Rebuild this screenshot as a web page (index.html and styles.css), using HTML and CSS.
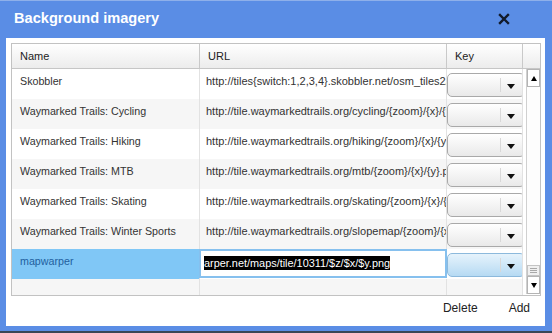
FILE: index.html
```html
<!DOCTYPE html>
<html lang="en">
<head>
    <meta charset="UTF-8">
    <title>Background imagery</title>
    <link rel="stylesheet" href="styles.css">
</head>
<body>

<div class="dialog">
    <div class="titlebar">
        <span class="title">Background imagery</span>
        <span class="close">
            <svg width="12" height="12" viewBox="0 0 12 12"><path d="M2 2 L10 10 M10 2 L2 10" stroke="#111a2a" stroke-width="2.4" stroke-linecap="square"/></svg>
        </span>
    </div>
    <div class="content">
        <div class="grid">
            <div class="grid-head">
                <div class="th col-name">Name</div>
                <div class="th col-url">URL</div>
                <div class="th col-key">Key</div>
                <div class="th col-spare"></div>
            </div>
            <div class="grid-body">
                <div class="rows">
                    <div class="row">
                        <div class="cell col-name">Skobbler</div>
                        <div class="cell col-url">http://tiles{switch:1,2,3,4}.skobbler.net/osm_tiles2/{zoom}/{x}/{y}.png</div>
                        <div class="cell col-key"><div class="combo"><span class="arrow"></span></div></div>
                    </div>
                    <div class="row alt">
                        <div class="cell col-name">Waymarked Trails: Cycling</div>
                        <div class="cell col-url">http://tile.waymarkedtrails.org/cycling/{zoom}/{x}/{y}.png</div>
                        <div class="cell col-key"><div class="combo"><span class="arrow"></span></div></div>
                    </div>
                    <div class="row">
                        <div class="cell col-name">Waymarked Trails: Hiking</div>
                        <div class="cell col-url">http://tile.waymarkedtrails.org/hiking/{zoom}/{x}/{y}.png</div>
                        <div class="cell col-key"><div class="combo"><span class="arrow"></span></div></div>
                    </div>
                    <div class="row alt">
                        <div class="cell col-name">Waymarked Trails: MTB</div>
                        <div class="cell col-url">http://tile.waymarkedtrails.org/mtb/{zoom}/{x}/{y}.png</div>
                        <div class="cell col-key"><div class="combo"><span class="arrow"></span></div></div>
                    </div>
                    <div class="row">
                        <div class="cell col-name">Waymarked Trails: Skating</div>
                        <div class="cell col-url">http://tile.waymarkedtrails.org/skating/{zoom}/{x}/{y}.png</div>
                        <div class="cell col-key"><div class="combo"><span class="arrow"></span></div></div>
                    </div>
                    <div class="row alt">
                        <div class="cell col-name">Waymarked Trails: Winter Sports</div>
                        <div class="cell col-url">http://tile.waymarkedtrails.org/slopemap/{zoom}/{x}/{y}.png</div>
                        <div class="cell col-key"><div class="combo"><span class="arrow"></span></div></div>
                    </div>
                    <div class="row selected">
                        <div class="cell col-name">mapwarper</div>
                        <div class="cell col-url edit"><div class="edit-box"><span class="sel">arper.net/maps/tile/10311/$z/$x/$y.png</span></div></div>
                        <div class="cell col-key"><div class="combo active"><span class="arrow"></span></div></div>
                    </div>
                    <div class="row alt">
                        <div class="cell col-name"></div>
                        <div class="cell col-url"></div>
                        <div class="cell col-key"></div>
                    </div>
                </div>
                <div class="scroll-area">
                    <div class="scrollbar">
                        <div class="sb-btn"><span class="tri-up"></span></div>
                        <div class="sb-track"></div>
                        <div class="sb-thumb"><span></span><span></span><span></span></div>
                        <div class="sb-btn"><span class="tri-down"></span></div>
                    </div>
                </div>
            </div>
        </div>
        <div class="actions">
            <span class="action">Delete</span>
            <span class="action">Add</span>
        </div>
    </div>
</div>

</body>
</html>
```

FILE: styles.css
```css
body {
    margin: 0;
    background-color: #3b4656;
    font-family: "Liberation Sans", Arial, sans-serif;
    color: #333;
}
.dialog {
    width: 552px;
    height: 331px;
    box-sizing: border-box;
    background-color: #5a8de5;
    border-top: 1px solid #8eb0ea;
    padding: 0 7px 5px 6px;
    display: flex;
    flex-direction: column;
}
.titlebar {
    height: 37px;
    display: flex;
    align-items: center;
    justify-content: space-between;
    padding: 0 35px 0 8px;
}
.title {
    color: #fff;
    font-weight: bold;
    font-size: 14.6px;
    margin-top: -3px;
}
.close {
    display: flex;
    margin-top: -2px;
}
.content {
    flex: 1;
    background-color: #fff;
    padding: 5px 4px 0 5px;
}
.grid {
    border: 1px solid #c2c2c2;
    height: 251px;
    display: flex;
    flex-direction: column;
    overflow: hidden;
}
.grid-head {
    display: flex;
    height: 24px;
    border-bottom: 1px solid #c6c6c6;
    background: linear-gradient(#ffffff, #ececec);
}
.th {
    box-sizing: border-box;
    font-size: 11px;
    color: #222;
    line-height: 24px;
    padding-left: 8px;
    border-right: 1px solid #c9c9c9;
}
.col-name { width: 188px; }
.col-url { width: 247px; }
.col-key { width: 76px; }
.col-spare { flex: 1; border-right: none; }
.grid-body {
    flex: 1;
    display: flex;
    overflow: hidden;
}
.rows {
    width: 511px;
    overflow: hidden;
}
.row {
    display: flex;
    height: 30px;
    background-color: #fff;
}
.row.alt {
    background-color: #f6f6f6;
}
.cell {
    box-sizing: border-box;
    font-size: 10.7px;
    line-height: 14px;
    padding: 5px 0 0 8px;
    border-right: 1px solid #e2e2e2;
    white-space: nowrap;
    overflow: hidden;
}
.cell.col-url {
    padding-left: 6px;
    font-size: 11px;
}
.cell.col-key {
    padding: 4px 0 0 0;
    border-right: 1px solid #e2e2e2;
}
.combo {
    position: relative;
    width: 76px;
    height: 22px;
    border: 1px solid #a9a9a9;
    border-radius: 5px;
    background: linear-gradient(#ffffff, #e9e9e9);
}
.combo::before {
    content: "";
    position: absolute;
    left: 52px;
    top: 4px;
    bottom: 4px;
    width: 1px;
    background-color: #d8d8d8;
}
.combo .arrow {
    position: absolute;
    left: 59px;
    top: 10px;
    border-left: 4px solid transparent;
    border-right: 4px solid transparent;
    border-top: 5px solid #111;
}
.combo.active {
    border-color: #8cb9dc;
    background: linear-gradient(#e6f3fc, #b6daf3);
}
.row.selected .col-name {
    background-color: #80c7f6;
    color: #1f5f9e;
}
.cell.edit {
    padding: 0;
    width: 248px;
    margin-left: -1px;
    border-right: none;
}
.edit-box {
    height: 29px;
    box-sizing: border-box;
    border: 2px solid #86c0ee;
    background-color: #fff;
    padding: 5px 0 0 3px;
    font-size: 10.9px;
    overflow: hidden;
}
.sel {
    background-color: #000;
    color: #fff;
    padding: 1px 0;
}
.scroll-area {
    flex: 1;
    background-color: #fff;
    padding-left: 3px;
}
.scrollbar {
    width: 13px;
    height: 225px;
    display: flex;
    flex-direction: column;
    border-left: 1px solid #d0d0d0;
}
.sb-btn {
    height: 16px;
    border: 1px solid #b4b4b4;
    background-color: #fff;
    display: flex;
    align-items: center;
    justify-content: center;
}
.tri-up {
    border-left: 3px solid transparent;
    border-right: 3px solid transparent;
    border-bottom: 5px solid #000;
}
.tri-down {
    border-left: 3px solid transparent;
    border-right: 3px solid transparent;
    border-top: 5px solid #000;
}
.sb-track {
    flex: 1;
    background-color: #fdfdfd;
}
.sb-thumb {
    height: 9px;
    border: 1px solid #c4c4c4;
    background-color: #f0f0f0;
    display: flex;
    flex-direction: column;
    justify-content: center;
    align-items: center;
    gap: 1px;
}
.sb-thumb span {
    width: 7px;
    height: 1px;
    background-color: #a8a8a8;
}
.actions {
    display: flex;
    justify-content: flex-end;
    gap: 31px;
    margin-top: 5px;
    padding-right: 11px;
}
.action {
    font-size: 12px;
    line-height: 14px;
    color: #222;
}
```
